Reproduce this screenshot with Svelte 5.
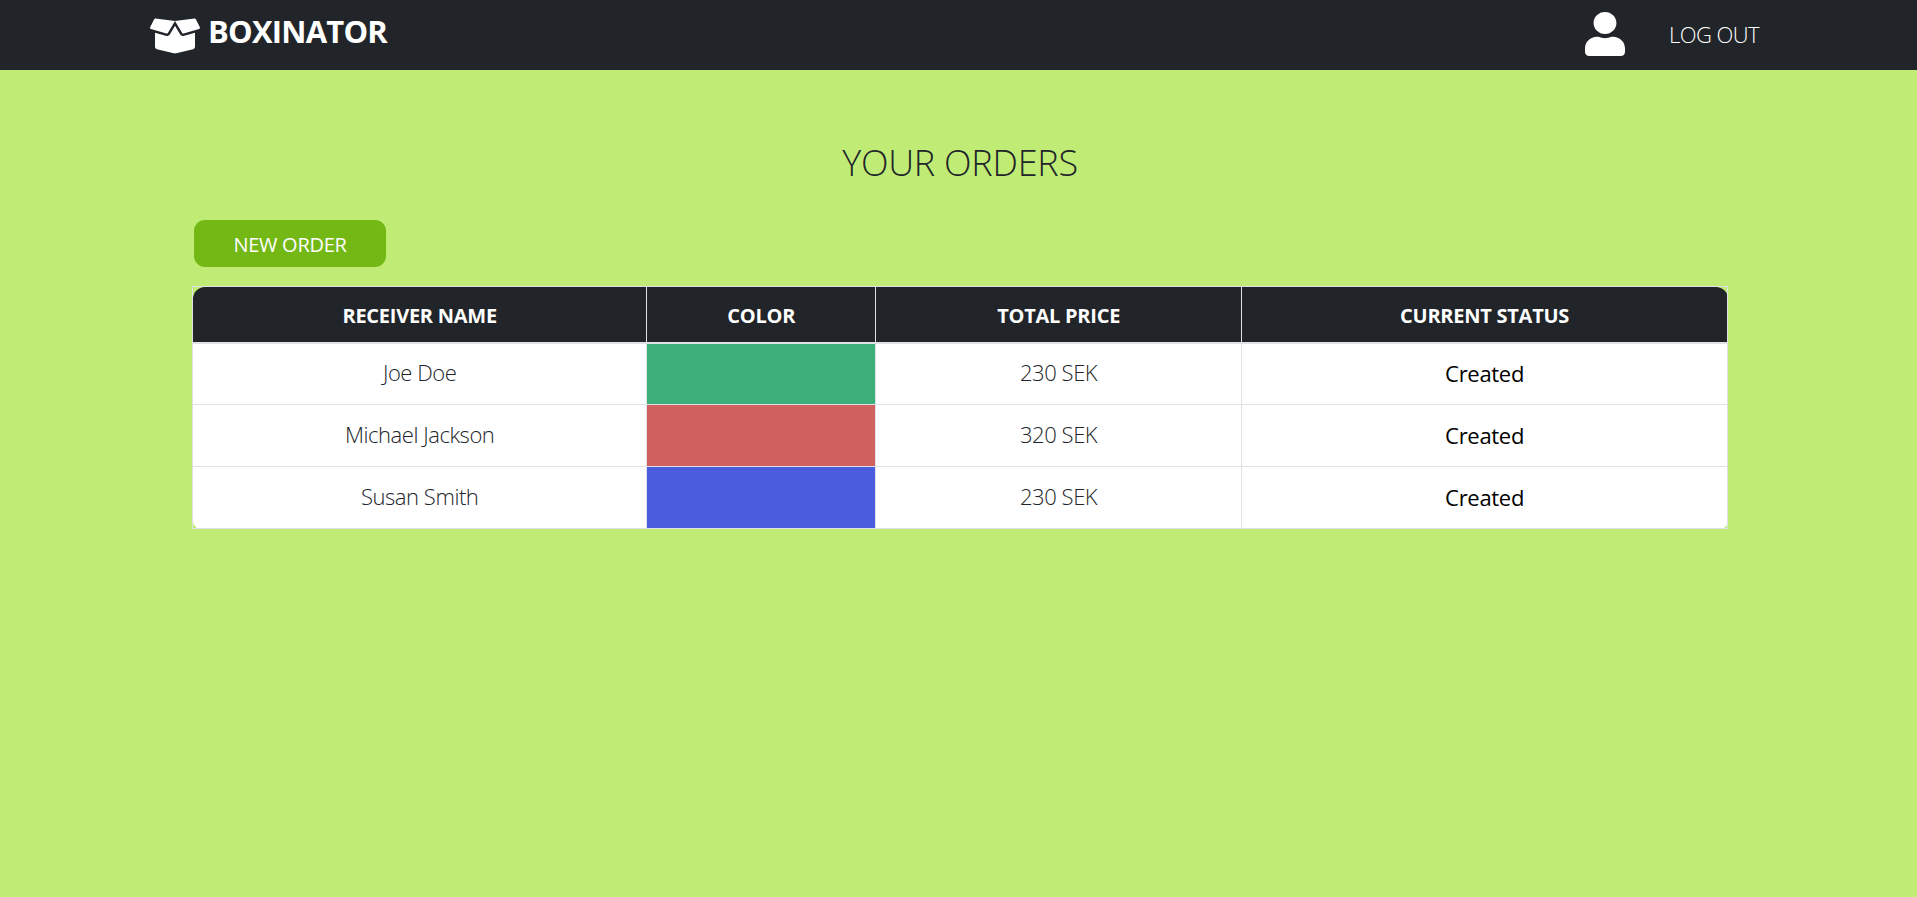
<script>
  const orders = [
    { name: "Joe Doe", color: "#3cb078", price: "230 SEK", status: "Created" },
    { name: "Michael Jackson", color: "#d16060", price: "320 SEK", status: "Created" },
    { name: "Susan Smith", color: "#4b5ddf", price: "230 SEK", status: "Created" },
  ];
</script>

<style>
  :global(body) {
    background: #c0ec76;
    font-family: "Open Sans", "Noto Sans", sans-serif;
  }

  .page {
    min-height: 897px;
    background: #c0ec76;
  }

  nav {
    height: 70px;
    background: #212529;
    display: flex;
    align-items: center;
    justify-content: space-between;
    padding: 0 158px 0 150px;
    color: #fff;
  }

  .brand {
    display: flex;
    align-items: center;
    gap: 8px;
    font-size: 31px;
    line-height: 40px;
    font-weight: 700;
    letter-spacing: -0.8px;
  }

  .brand span {
    margin-bottom: 8px;
  }

  .brand svg {
    width: 50px;
    height: 40px;
    margin-top: 2px;
  }

  .user {
    display: flex;
    align-items: center;
    gap: 44px;
    font-size: 22px;
    font-weight: 300;
    letter-spacing: -0.55px;
  }

  .user span {
    margin-bottom: 2px;
  }

  .user svg {
    width: 40px;
    height: 44px;
    margin-bottom: 2px;
  }

  main {
    padding: 0 189px 0 192px;
  }

  h1 {
    margin: 71px 0 35px;
    text-align: center;
    font-size: 36px;
    line-height: 44px;
    font-weight: 300;
    color: #212529;
    letter-spacing: -0.25px;
  }

  .new-order {
    display: block;
    width: 192px;
    height: 47px;
    margin: 0 0 19px 2px;
    padding: 2px 0 0;
    border: 0;
    border-radius: 11px;
    background: #74b816;
    color: #fff;
    font-family: inherit;
    font-size: 20px;
    letter-spacing: -0.3px;
  }

  table {
    width: 100%;
    table-layout: fixed;
    border-collapse: collapse;
    outline: 1px solid #dee2e6;
    outline-offset: -1px;
  }

  th,
  td {
    box-sizing: border-box;
    border: 1px solid #dee2e6;
    text-align: center;
    padding: 0;
  }

  th {
    height: 56px;
    padding-top: 2px;
    background: #212529;
    color: #fff;
    font-size: 20px;
    font-weight: 700;
    letter-spacing: -0.25px;
    border-bottom-width: 2px;
  }

  th:first-child {
    border-top-left-radius: 12px;
  }

  th:last-child {
    border-top-right-radius: 12px;
  }

  td {
    height: 62px;
    padding-bottom: 4px;
    background: #fff;
    color: #212529;
    font-size: 22px;
    font-weight: 300;
    letter-spacing: -0.45px;
  }

  td.status {
    padding-bottom: 2px;
    color: #000;
    font-weight: 400;
    letter-spacing: -0.3px;
  }

  tr:last-child td:first-child {
    border-bottom-left-radius: 8px;
  }

  tr:last-child td:last-child {
    border-bottom-right-radius: 8px;
  }
</style>

<div class="page">
  <nav>
    <div class="brand">
      <svg viewBox="0 0 640 512" fill="#fff">
        <path d="M425.7 256c-16.9 0-32.8-9-41.4-23.4L320 126l-64.2 106.6c-8.7 14.5-24.6 23.5-41.5 23.5-4.5 0-9-.6-13.3-1.9L64 215v178c0 14.7 10 27.5 24.2 31l216.2 54.1c10.2 2.5 20.9 2.5 31 0L551.8 424c14.2-3.6 24.2-16.4 24.2-31V215l-137 39.1c-4.3 1.3-8.8 1.9-13.3 1.9zm212.6-112.2L586.8 41c-3.1-6.2-9.8-9.8-16.7-8.9L320 64l91.7 152.1c3.8 6.3 11.4 9.3 18.5 7.3l197.9-56.5c9.9-2.9 14.7-13.9 10.2-23.1zM53.2 41L1.7 143.8c-4.6 9.2.3 20.2 10.1 23l197.9 56.5c7.1 2 14.7-1 18.5-7.3L320 64 69.8 32.1c-6.9-.8-13.5 2.7-16.6 8.9z" />
      </svg>
      <span>BOXINATOR</span>
    </div>
    <div class="user">
      <svg viewBox="0 0 448 512" fill="#fff" preserveAspectRatio="none">
        <path d="M224 256c70.7 0 128-57.3 128-128S294.7 0 224 0 96 57.3 96 128s57.3 128 128 128zm89.6 32h-16.7c-22.2 10.2-46.9 16-72.9 16s-50.6-5.8-72.9-16h-16.7C60.2 288 0 348.2 0 422.4V464c0 26.5 21.5 48 48 48h352c26.5 0 48-21.5 48-48v-41.6c0-74.2-60.2-134.4-134.4-134.4z" />
      </svg>
      <span>LOG OUT</span>
    </div>
  </nav>

  <main>
    <h1>YOUR ORDERS</h1>
    <button class="new-order">NEW ORDER</button>
    <table>
      <colgroup>
        <col style="width: 29.6%" />
        <col style="width: 14.9%" />
        <col style="width: 23.85%" />
        <col style="width: 31.65%" />
      </colgroup>
      <thead>
        <tr>
          <th>RECEIVER NAME</th>
          <th>COLOR</th>
          <th>TOTAL PRICE</th>
          <th>CURRENT STATUS</th>
        </tr>
      </thead>
      <tbody>
        {#each orders as order}
          <tr>
            <td>{order.name}</td>
            <td style="background: {order.color}"></td>
            <td>{order.price}</td>
            <td class="status">{order.status}</td>
          </tr>
        {/each}
      </tbody>
    </table>
  </main>
</div>
